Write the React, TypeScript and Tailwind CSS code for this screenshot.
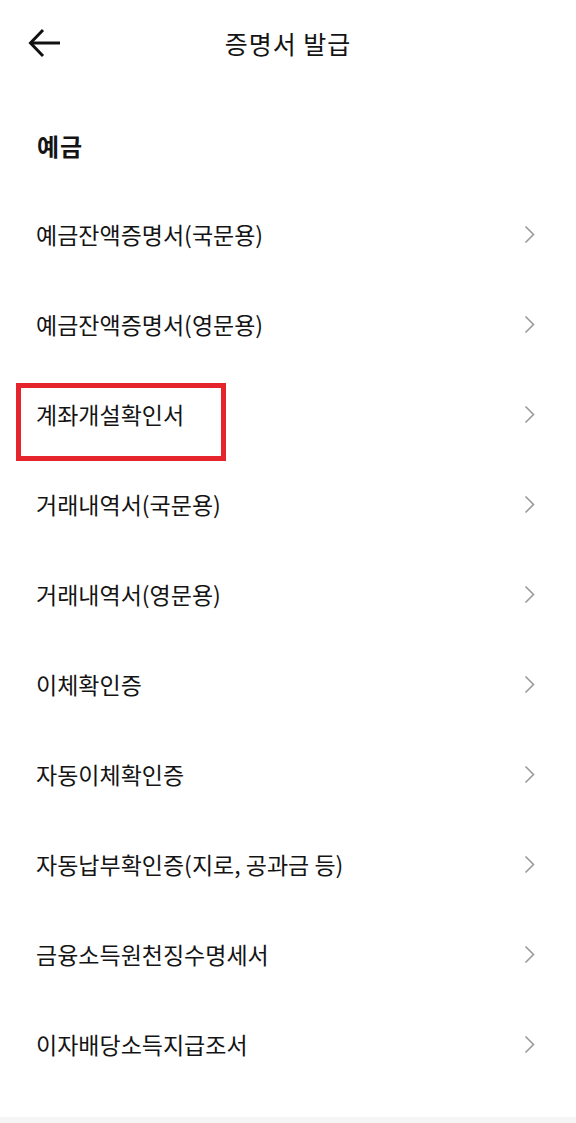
import React, { FC } from 'react';

const items = [
    '예금잔액증명서(국문용)',
    '예금잔액증명서(영문용)',
    '계좌개설확인서',
    '거래내역서(국문용)',
    '거래내역서(영문용)',
    '이체확인증',
    '자동이체확인증',
    '자동납부확인증(지로, 공과금 등)',
    '금융소득원천징수명세서',
    '이자배당소득지급조서',
];

const font = { fontFamily: '"Noto Sans CJK KR", "Noto Sans", sans-serif' };

const BackArrow: FC = () => (
    <svg width="32" height="30" viewBox="0 0 32 30" fill="none" stroke="#111" strokeWidth="3" strokeLinecap="butt" strokeLinejoin="miter">
        <path d="M32 15H3" />
        <path d="M15 2L2.5 15L15 28" />
    </svg>
);

const Chevron: FC = () => (
    <svg width="11" height="19" viewBox="0 0 11 19" fill="none" stroke="#999" strokeWidth="1.6">
        <path d="M1.5 1.5l8 8-8 8" />
    </svg>
);

const Row: FC<{ label: string, marked?: boolean }> = ({ label, marked }) => (
    <div className="relative flex h-[90px] items-center justify-between pl-[36px] pr-[41px]">
        <span className="text-[23px] leading-none text-[#141414]">{label}</span>
        <Chevron />
        {marked && <div className="absolute left-[16px] top-[14px] h-[78px] w-[210px] border-[5px] border-[#e5252b]" />}
    </div>
);

export default function App() {
    return (
        <div className="flex min-h-[1123px] w-[576px] flex-col bg-white" style={font}>
            <div className="relative flex h-[86px] items-center justify-center">
                <div className="absolute left-[28px] top-[28px]">
                    <BackArrow />
                </div>
                <h1 className="text-[25px] font-normal leading-none tracking-[1px] text-[#141414]">증명서 발급</h1>
            </div>
            <div className="pl-[37px] pt-[45px] pb-[28px]">
                <h2 className="text-[24px] font-bold leading-[30px] tracking-[1px] text-[#141414]">예금</h2>
            </div>
            <div className="flex flex-col">
                {items.map((label, i) => (
                    <Row key={label} label={label} marked={i === 2} />
                ))}
            </div>
            <div className="h-[28px]" />
            <div className="flex-1 bg-[#f5f5f5]" />
        </div>
    );
}
